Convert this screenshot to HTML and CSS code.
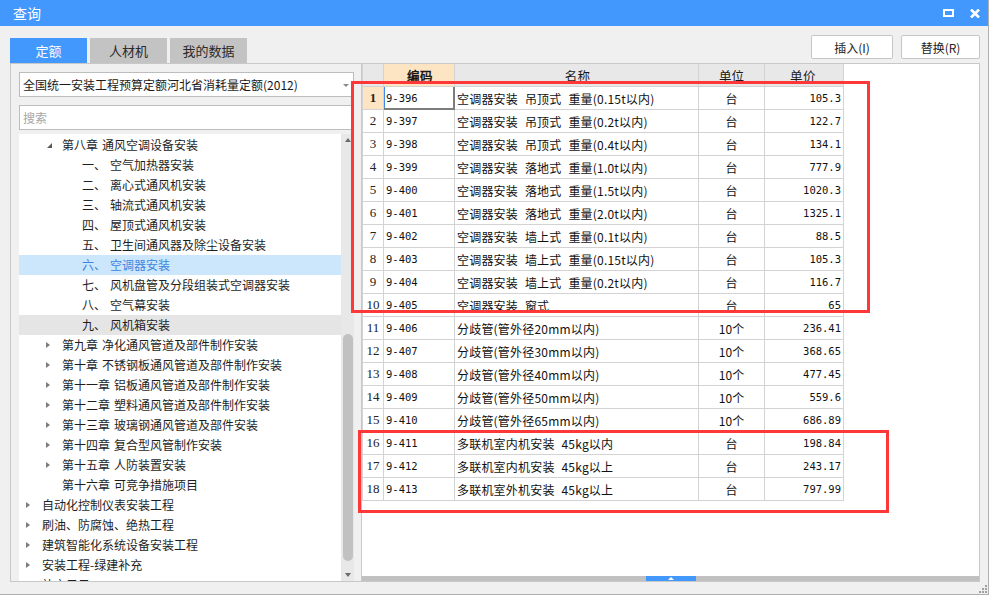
FILE: index.html
```html
<!DOCTYPE html>
<html lang="zh-CN">
<head>
<meta charset="utf-8">
<title>查询</title>
<link rel="stylesheet" href="styles.css">
</head>
<body>
<div class="window">
  <div class="titlebar">
    <span class="title">查询</span>
    <div class="ctrls">
      <span class="restore"></span>
      <svg class="close" width="10" height="9" viewBox="0 0 10 9"><path d="M1 0.5 L9 8.5 M9 0.5 L1 8.5" stroke="#fff" stroke-width="2.6"/></svg>
    </div>
  </div>
  <div class="toolbar">
    <div class="tabs">
      <div class="tab active">定额</div>
      <div class="tab">人材机</div>
      <div class="tab">我的数据</div>
    </div>
    <div class="btns">
      <div class="btn b1">插入(I)</div>
      <div class="btn b2">替换(R)</div>
    </div>
  </div>
  <div class="main">
    <div class="left">
      <div class="select"><span>全国统一安装工程预算定额河北省消耗量定额(2012)</span><i class="caret"></i></div>
      <div class="search">搜索</div>
      <div class="tree">
        <div class="rows">
          <div class="row l2"><i class="exp open"></i><span class="ch">第八章</span><span>通风空调设备安装</span></div>
          <div class="row l3"><i class="exp"></i><span class="num">一、</span><span>空气加热器安装</span></div>
          <div class="row l3"><i class="exp"></i><span class="num">二、</span><span>离心式通风机安装</span></div>
          <div class="row l3"><i class="exp"></i><span class="num">三、</span><span>轴流式通风机安装</span></div>
          <div class="row l3"><i class="exp"></i><span class="num">四、</span><span>屋顶式通风机安装</span></div>
          <div class="row l3"><i class="exp"></i><span class="num">五、</span><span>卫生间通风器及除尘设备安装</span></div>
          <div class="row l3 selected"><i class="exp"></i><span class="num">六、</span><span>空调器安装</span></div>
          <div class="row l3"><i class="exp"></i><span class="num">七、</span><span>风机盘管及分段组装式空调器安装</span></div>
          <div class="row l3"><i class="exp"></i><span class="num">八、</span><span>空气幕安装</span></div>
          <div class="row l3 hover"><i class="exp"></i><span class="num">九、</span><span>风机箱安装</span></div>
          <div class="row l2"><i class="exp closed"></i><span class="ch">第九章</span><span>净化通风管道及部件制作安装</span></div>
          <div class="row l2"><i class="exp closed"></i><span class="ch">第十章</span><span>不锈钢板通风管道及部件制作安装</span></div>
          <div class="row l2"><i class="exp closed"></i><span class="ch">第十一章</span><span>铝板通风管道及部件制作安装</span></div>
          <div class="row l2"><i class="exp closed"></i><span class="ch">第十二章</span><span>塑料通风管道及部件制作安装</span></div>
          <div class="row l2"><i class="exp closed"></i><span class="ch">第十三章</span><span>玻璃钢通风管道及部件安装</span></div>
          <div class="row l2"><i class="exp closed"></i><span class="ch">第十四章</span><span>复合型风管制作安装</span></div>
          <div class="row l2"><i class="exp closed"></i><span class="ch">第十五章</span><span>人防装置安装</span></div>
          <div class="row l2"><i class="exp"></i><span class="ch">第十六章</span><span>可竞争措施项目</span></div>
          <div class="row l1"><i class="exp closed"></i><span>自动化控制仪表安装工程</span></div>
          <div class="row l1"><i class="exp closed"></i><span>刷油、防腐蚀、绝热工程</span></div>
          <div class="row l1"><i class="exp closed"></i><span>建筑智能化系统设备安装工程</span></div>
          <div class="row l1"><i class="exp closed"></i><span>安装工程-绿建补充</span></div>
          <div class="row l1"><i class="exp closed"></i><span>补充子目</span></div>
        </div>
        <div class="vscroll">
          <i class="arr up"></i>
          <div class="vthumb"></div>
          <i class="arr down"></i>
        </div>
      </div>
    </div>
    <div class="right">
      <div class="grid">
        <div class="gtable">
          <div class="grow head">
            <div class="c rn"></div>
            <div class="c code hl">编码</div>
            <div class="c name">名称</div>
            <div class="c unit">单位</div>
            <div class="c price">单价</div>
          </div>
          <div class="grow"><div class="c rn cur">1</div><div class="c code sel">9-396</div><div class="c name">空调器安装 吊顶式 重量(0.15t以内)</div><div class="c unit">台</div><div class="c price">105.3</div></div>
          <div class="grow"><div class="c rn">2</div><div class="c code">9-397</div><div class="c name">空调器安装 吊顶式 重量(0.2t以内)</div><div class="c unit">台</div><div class="c price">122.7</div></div>
          <div class="grow"><div class="c rn">3</div><div class="c code">9-398</div><div class="c name">空调器安装 吊顶式 重量(0.4t以内)</div><div class="c unit">台</div><div class="c price">134.1</div></div>
          <div class="grow"><div class="c rn">4</div><div class="c code">9-399</div><div class="c name">空调器安装 落地式 重量(1.0t以内)</div><div class="c unit">台</div><div class="c price">777.9</div></div>
          <div class="grow"><div class="c rn">5</div><div class="c code">9-400</div><div class="c name">空调器安装 落地式 重量(1.5t以内)</div><div class="c unit">台</div><div class="c price">1020.3</div></div>
          <div class="grow"><div class="c rn">6</div><div class="c code">9-401</div><div class="c name">空调器安装 落地式 重量(2.0t以内)</div><div class="c unit">台</div><div class="c price">1325.1</div></div>
          <div class="grow"><div class="c rn">7</div><div class="c code">9-402</div><div class="c name">空调器安装 墙上式 重量(0.1t以内)</div><div class="c unit">台</div><div class="c price">88.5</div></div>
          <div class="grow"><div class="c rn">8</div><div class="c code">9-403</div><div class="c name">空调器安装 墙上式 重量(0.15t以内)</div><div class="c unit">台</div><div class="c price">105.3</div></div>
          <div class="grow"><div class="c rn">9</div><div class="c code">9-404</div><div class="c name">空调器安装 墙上式 重量(0.2t以内)</div><div class="c unit">台</div><div class="c price">116.7</div></div>
          <div class="grow"><div class="c rn">10</div><div class="c code">9-405</div><div class="c name">空调器安装 窗式</div><div class="c unit">台</div><div class="c price">65</div></div>
          <div class="grow"><div class="c rn">11</div><div class="c code">9-406</div><div class="c name">分歧管(管外径20mm以内)</div><div class="c unit">10个</div><div class="c price">236.41</div></div>
          <div class="grow"><div class="c rn">12</div><div class="c code">9-407</div><div class="c name">分歧管(管外径30mm以内)</div><div class="c unit">10个</div><div class="c price">368.65</div></div>
          <div class="grow"><div class="c rn">13</div><div class="c code">9-408</div><div class="c name">分歧管(管外径40mm以内)</div><div class="c unit">10个</div><div class="c price">477.45</div></div>
          <div class="grow"><div class="c rn">14</div><div class="c code">9-409</div><div class="c name">分歧管(管外径50mm以内)</div><div class="c unit">10个</div><div class="c price">559.6</div></div>
          <div class="grow"><div class="c rn">15</div><div class="c code">9-410</div><div class="c name">分歧管(管外径65mm以内)</div><div class="c unit">10个</div><div class="c price">686.89</div></div>
          <div class="grow"><div class="c rn">16</div><div class="c code">9-411</div><div class="c name">多联机室内机安装 45kg以内</div><div class="c unit">台</div><div class="c price">198.84</div></div>
          <div class="grow"><div class="c rn">17</div><div class="c code">9-412</div><div class="c name">多联机室内机安装 45kg以上</div><div class="c unit">台</div><div class="c price">243.17</div></div>
          <div class="grow"><div class="c rn">18</div><div class="c code">9-413</div><div class="c name">多联机室外机安装 45kg以上</div><div class="c unit">台</div><div class="c price">797.99</div></div>
        </div>
      </div>
      <div class="hscroll"><div class="hthumb"><i class="tri"></i></div></div>
    </div>
  </div>
  <div class="statusbar">
    <svg class="grip" width="8" height="8" viewBox="0 0 8 8"><g fill="#a0a0a0"><rect x="6" y="0" width="2" height="2"/><rect x="3" y="3" width="2" height="2"/><rect x="6" y="3" width="2" height="2"/><rect x="0" y="6" width="2" height="2"/><rect x="3" y="6" width="2" height="2"/><rect x="6" y="6" width="2" height="2"/></g></svg>
  </div>
</div>
<div class="mark mark1"></div>
<div class="mark mark2"></div>
</body>
</html>
```
FILE: styles.css
```css
* { box-sizing: border-box; }
body {
  margin: 0;
  width: 991px;
  height: 601px;
  background: #ffffff;
  font-family: "Noto Sans CJK SC", "Liberation Sans", sans-serif;
  position: relative;
  overflow: hidden;
  color: #1e1e1e;
}
.window {
  width: 989px;
  height: 595px;
  border-right: 1px solid #aeaeae;
  border-bottom: 1px solid #aeaeae;
  background: #f0f0f0;
  display: flex;
  flex-direction: column;
}
.titlebar {
  height: 26px;
  flex: none;
  background: #4298fd;
  display: flex;
  align-items: center;
  padding: 0 8px 0 13px;
  color: #fff;
  font-size: 14px;
}
.title { line-height: 26px; }
.ctrls { margin-left: auto; display: flex; align-items: center; gap: 16px; }
.restore {
  display: block;
  width: 11px;
  height: 8px;
  border: 2px solid #fff;
}
.close { display: block; }

.toolbar {
  height: 37px;
  flex: none;
  display: flex;
  justify-content: space-between;
  padding: 0 8px 0 10px;
}
.tabs { display: flex; align-items: flex-end; gap: 3px; }
.tab {
  width: 77px;
  height: 25px;
  display: flex;
  align-items: center;
  justify-content: center;
  background: #c3c3c3;
  color: #2a2a2a;
  font-size: 13px;
}
.tab.active { background: #4298fd; color: #fff; }
.btns { display: flex; gap: 8px; padding-top: 9px; }
.btn {
  height: 24px;
  border: 1px solid #c6c6c6;
  border-radius: 2px;
  background: #fff;
  font-size: 12px;
  color: #222;
  display: flex;
  align-items: center;
  justify-content: center;
}
.b1 { width: 82px; }
.b2 { width: 79px; }

.main {
  height: 519px;
  flex: none;
  display: flex;
  padding: 0 8px 0 10px;
}
.left {
  width: 352px;
  flex: none;
  border: 1px solid #c8c8c8;
  padding: 8px 7px 0 8px;
  display: flex;
  flex-direction: column;
}
.select {
  height: 25px;
  flex: none;
  border: 1px solid #bdbdbd;
  background: #fff;
  font-size: 12px;
  color: #1a1a1a;
  display: flex;
  align-items: center;
  padding: 0 4px 0 3px;
  white-space: nowrap;
}
.caret {
  margin-left: auto;
  width: 0;
  height: 0;
  border-left: 3px solid transparent;
  border-right: 3px solid transparent;
  border-top: 3px solid #8a8a8a;
  margin-top: 1px;
}
.search {
  margin-top: 8px;
  height: 25px;
  flex: none;
  border: 1px solid #bdbdbd;
  background: #fff;
  font-size: 12px;
  color: #a6a6a6;
  display: flex;
  align-items: center;
  padding-left: 3px;
}
.tree {
  margin-top: 4px;
  flex: 1;
  display: flex;
  overflow: hidden;
  background: #fff;
}
.rows {
  width: 322px;
  flex: none;
  padding-top: 1px;
  overflow: hidden;
}
.row {
  height: 20px;
  display: flex;
  align-items: center;
  font-size: 12px;
  line-height: 18px;
  color: #1e1e1e;
  white-space: nowrap;
}
.row > span { margin-top: -1px; }
.row.l1 { padding-left: 3px; }
.row.l2 { padding-left: 23px; }
.row.l3 { padding-left: 43px; }
.row.selected { background: #cce6fb; color: #3d86e0; }
.row.hover { background: #e5e5e5; }
.exp {
  width: 20px;
  height: 20px;
  flex: none;
  display: flex;
  align-items: center;
}
.exp.closed::before {
  content: "";
  margin-left: 4px;
  width: 0;
  height: 0;
  border-top: 3.5px solid transparent;
  border-bottom: 3.5px solid transparent;
  border-left: 4px solid #7c7c7c;
}
.exp.open::before {
  content: "";
  margin-left: 5px;
  width: 0;
  height: 0;
  border-left: 5px solid transparent;
  border-bottom: 5px solid #5a5a5a;
}
.ch { margin-right: 4px; }
.num { width: 28px; flex: none; }

.vscroll {
  width: 13px;
  flex: none;
  background: #e8e8e8;
  display: flex;
  flex-direction: column;
  align-items: center;
}
.arr {
  width: 0;
  height: 0;
  border-left: 3.5px solid transparent;
  border-right: 3.5px solid transparent;
}
.arr.up { border-bottom: 4px solid #6a6a6a; margin-top: 4px; }
.arr.down { border-top: 4px solid #6a6a6a; margin-top: auto; margin-bottom: 4px; }
.vthumb {
  width: 10px;
  height: 227px;
  margin-top: 192px;
  background: #c1c1c1;
  border-radius: 5px;
}

.right {
  flex: 1;
  border: 1px solid #c8c8c8;
  border-left: none;
  background: #fff;
  display: flex;
  flex-direction: column;
}
.grid { flex: 1; overflow: hidden; }
.gtable {
  width: max-content;
  border-left: 1px solid #d3d3d3;
}
.grow {
  display: grid;
  grid-template-columns: 21px 71px 244px 66px 79px;
  height: 23px;
}
.c {
  border-right: 1px solid #d3d3d3;
  border-bottom: 1px solid #d3d3d3;
  display: flex;
  align-items: center;
  overflow: hidden;
  white-space: nowrap;
  font-size: 12px;
  color: #111;
}
.head .c {
  background: #e8e8e8;
  justify-content: center;
  color: #1a1a1a;
  font-size: 12.5px;
}
.head .c.hl { background: #fde4c3; font-weight: bold; }
.rn {
  justify-content: center;
  font-family: "Liberation Serif", serif;
  font-size: 13px;
  color: #222;
}
.rn.cur { background: #fde4c3; font-weight: bold; }
.code {
  padding-left: 2px;
  font-family: "DejaVu Sans Mono", monospace;
  font-size: 10.5px;
}
.sel {
  border-right: 2px solid #7d7d7d;
  border-bottom: 2px solid #7d7d7d;
  box-shadow: inset 1px 0 0 #3d8bf0;
}
.name { padding-left: 2px; word-spacing: 4px; letter-spacing: 0.2px; }
.unit { justify-content: center; }
.price {
  justify-content: flex-end;
  padding-right: 2px;
  font-family: "DejaVu Sans Mono", monospace;
  font-size: 10.5px;
}

.hscroll {
  height: 5px;
  flex: none;
  background: #c0c0c0;
  display: flex;
  padding-left: 284px;
}
.hthumb {
  width: 50px;
  height: 5px;
  background: #4298fd;
  display: flex;
  align-items: center;
  justify-content: center;
}
.tri {
  width: 0;
  height: 0;
  border-left: 3px solid transparent;
  border-right: 3px solid transparent;
  border-bottom: 3px solid #fff;
}

.statusbar {
  flex: 1;
  display: flex;
  justify-content: flex-end;
  align-items: flex-end;
  padding: 0 1px 1px 0;
}
.grip { display: block; }

.mark {
  position: absolute;
  border: 3px solid #fe3838;
  pointer-events: none;
}
.mark1 { left: 351px; top: 81px; width: 519px; height: 232px; }
.mark2 { left: 358px; top: 430px; width: 531px; height: 83px; }
```
